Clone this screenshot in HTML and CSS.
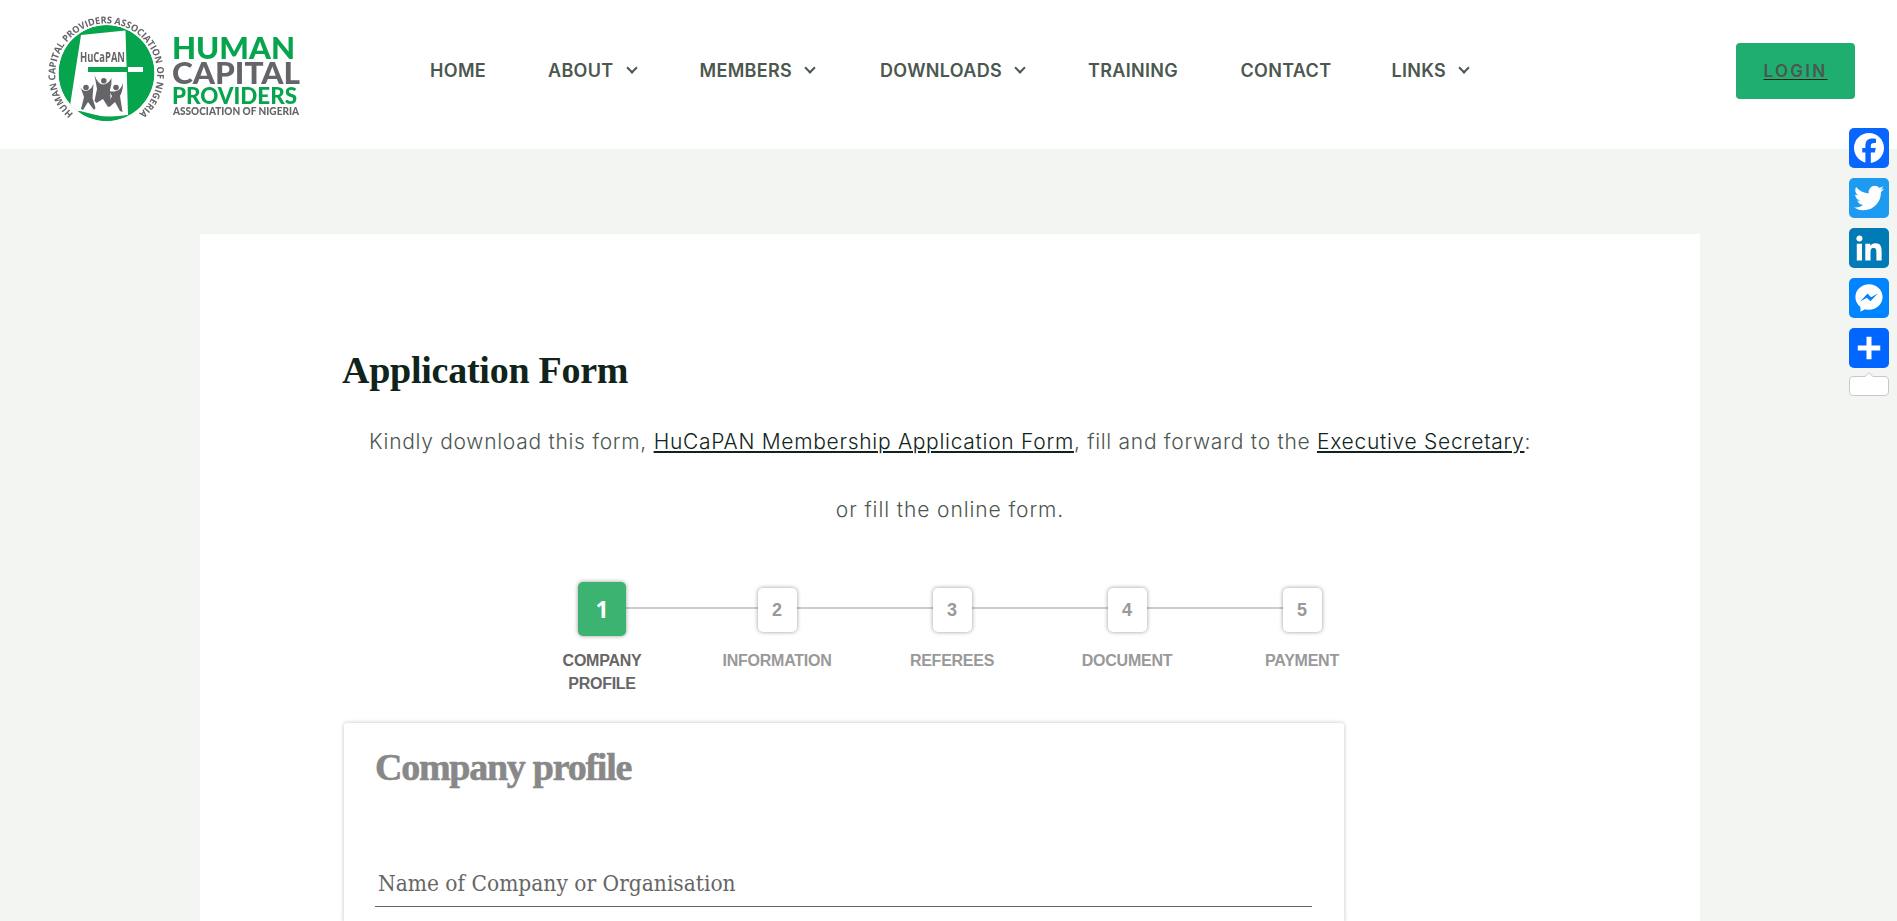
FILE: index.html
```html
<!DOCTYPE html>
<html lang="en">
<head>
<meta charset="utf-8">
<title>Application Form - HuCaPAN</title>
<link rel="stylesheet" href="styles.css">
</head>
<body>
<header class="site-header">
  <a class="logo">
    <svg width="290" height="149" viewBox="0 0 290 149">
      <defs>
        <path id="ring-text" d="M43.500 113.500A51 51 0 1 1 109 113.500"/>
        <clipPath id="disc"><circle cx="76.500" cy="73" r="48"/></clipPath>
      </defs>
      <g clip-path="url(#disc)">
        <circle cx="76.500" cy="73" r="48" fill="#06a44c"/>
        <path d="M51 35L95.500 30.500L98 115L82 119L50 111L39 112Z" fill="#fff"/>
        <path d="M50 112Q73 119 98 115V122H60Z" fill="#06a44c"/>
      </g>
      <path d="M58 67h39v5H58z" fill="#06a44c"/>
      <path d="M98 67h15v5H98z" fill="#fff"/>
      <g fill="#656468">
        <circle cx="56" cy="87.500" r="2.800"/><circle cx="73.800" cy="80.800" r="2.800"/><circle cx="86" cy="87.500" r="2.800"/>
        <path d="M48 83Q51 91 56 91Q61 90 63.500 84L62.500 98L65.500 108L64 110L58 102L53 110L51 109L54 97Q52 90 48 83Z"/>
        <path d="M64.500 75Q68 85 74 84.500Q79 83 81.500 78Q82 84 80 90L81 105L78 107L73 99L66.500 103L64.500 101L67 89Z"/>
        <path d="M79 91Q83 92 86 91Q91 90 93 83Q93 91 90 96L92.500 112L90 111L85 102L79.500 107L78 105L82 96Z"/>
      </g>
      <text class="logo-ring"><textPath href="#ring-text" textLength="249" lengthAdjust="spacingAndGlyphs">HUMAN CAPITAL PROVIDERS ASSOCIATION OF NIGERIA</textPath></text>
      <text class="logo-mark" x="50" y="61.500" textLength="45" lengthAdjust="spacingAndGlyphs">HuCaPAN</text>
      <text class="logo-word logo-green logo-xl" x="142" y="59" textLength="123" lengthAdjust="spacingAndGlyphs">HUMAN</text>
      <text class="logo-word logo-xl" x="142" y="84" textLength="128" lengthAdjust="spacingAndGlyphs">CAPITAL</text>
      <text class="logo-word logo-green logo-lg" x="142" y="104" textLength="125" lengthAdjust="spacingAndGlyphs">PROVIDERS</text>
      <text class="logo-word logo-sm" x="143" y="115" textLength="126" lengthAdjust="spacingAndGlyphs">ASSOCIATION OF NIGERIA</text>
    </svg>
  </a>
  <nav class="menu">
    <a>HOME</a>
    <a>ABOUT<i class="chevron"></i></a>
    <a>MEMBERS<i class="chevron"></i></a>
    <a>DOWNLOADS<i class="chevron"></i></a>
    <a>TRAINING</a>
    <a>CONTACT</a>
    <a>LINKS<i class="chevron"></i></a>
  </nav>
  <a class="login"><span>LOGIN</span></a>
</header>

<main class="page">
  <h1 class="title">Application Form</h1>
  <p class="intro">Kindly download this form, <a>HuCaPAN Membership Application Form</a>, fill and forward to the <a>Executive Secretary</a>:</p>
  <p class="intro intro-second">or fill the online form.</p>
  <ol class="steps">
    <li class="step step-active"><span class="step-number">1</span><span class="step-label">COMPANY PROFILE</span></li>
    <li class="step"><span class="step-number">2</span><span class="step-label">INFORMATION</span></li>
    <li class="step"><span class="step-number">3</span><span class="step-label">REFEREES</span></li>
    <li class="step"><span class="step-number">4</span><span class="step-label">DOCUMENT</span></li>
    <li class="step"><span class="step-number">5</span><span class="step-label">PAYMENT</span></li>
  </ol>
  <section class="card">
    <h2 class="card-title">Company profile</h2>
    <div class="field"><span>Name of Company or Organisation</span></div>
  </section>
</main>

<aside class="share">
  <svg class="share-icon facebook" viewBox="0 0 32 32"><path d="M28 16c0-6.627-5.373-12-12-12S4 9.373 4 16c0 5.628 3.875 10.350 9.101 11.647v-7.980h-2.474V16H13.100v-1.580c0-4.085 1.849-5.978 5.859-5.978.76 0 2.072.15 2.608.298v3.325c-.283-.03-.775-.045-1.386-.045-1.967 0-2.728.745-2.728 2.683V16h3.920l-.673 3.667h-3.247v8.245C23.395 27.195 28 22.135 28 16"/></svg>
  <svg class="share-icon twitter" viewBox="0 0 32 32"><path d="M28 8.557a10 10 0 0 1-2.828.775 4.930 4.930 0 0 0 2.166-2.725 9.700 9.700 0 0 1-3.130 1.194 4.920 4.920 0 0 0-3.593-1.550 4.924 4.924 0 0 0-4.794 6.049c-4.090-.21-7.720-2.170-10.150-5.150a4.940 4.940 0 0 0-.665 2.477c0 1.710.87 3.214 2.190 4.100a5 5 0 0 1-2.230-.616v.06c0 2.390 1.700 4.380 3.952 4.830-.414.115-.85.174-1.297.174q-.476-.001-.928-.086a4.935 4.935 0 0 0 4.600 3.420 9.900 9.900 0 0 1-6.114 2.107q-.597 0-1.175-.068a13.950 13.950 0 0 0 7.550 2.213c9.056 0 14.010-7.507 14.010-14.013q0-.32-.015-.637c.96-.695 1.795-1.560 2.455-2.550z"/></svg>
  <svg class="share-icon linkedin" viewBox="0 0 32 32"><path d="M6.227 12.610h4.190v13.480h-4.190zm2.095-6.700a2.430 2.430 0 0 1 0 4.860c-1.344 0-2.428-1.090-2.428-2.430s1.084-2.430 2.428-2.430m4.720 6.700h4.020v1.840h.058c.56-1.058 1.927-2.176 3.965-2.176 4.238 0 5.020 2.792 5.020 6.420v7.395h-4.183v-6.560c0-1.564-.03-3.574-2.178-3.574-2.180 0-2.514 1.700-2.514 3.460v6.668h-4.187z"/></svg>
  <svg class="share-icon messenger" viewBox="0 0 32 32"><path d="M16 5C9.986 5 5.110 9.560 5.110 15.182c0 3.200 1.580 6.054 4.046 7.920V27l3.716-2.060c.99.276 2.040.425 3.128.425 6.014 0 10.890-4.560 10.890-10.183S22.013 5 16 5m1.147 13.655L14.330 15.730l-5.423 3 5.946-6.310 2.816 2.925 5.420-3-5.946 6.310z"/></svg>
  <svg class="share-icon more" viewBox="0 0 32 32"><path d="M14 7h4v18h-4zM7 14h18v4H7z"/></svg>
  <svg class="share-count" width="40" height="25" viewBox="0 0 40 25"><path d="M4 4.500H16L20 .7L24 4.500H36Q39.500 4.500 39.500 8V20Q39.500 23.500 36 23.500H4Q.5 23.500 .5 20V8Q.5 4.500 4 4.500Z"/></svg>
</aside>
</body>
</html>
```
FILE: styles.css
```css
* { box-sizing: border-box; }

body {
  margin: 0;
  background: #f3f5f2;
  font-family: Inter, "Liberation Sans", sans-serif;
  color: #4b574f;
}

.site-header {
  display: flex;
  height: 149px;
  padding: 0 42px 0 30px;
  background: #fff;
}

.logo { width: 290px; flex: none; }
.logo svg { display: block; filter: blur(0.35px); }
.logo text { font-family: "Open Sans", sans-serif; font-weight: 700; fill: #656468; }
.logo .logo-ring { font-size: 9.5px; }
.logo .logo-mark { font-size: 15px; }
.logo .logo-word { font-family: Lato, sans-serif; font-weight: 900; }
.logo .logo-green { fill: #06a44c; }
.logo .logo-xl { font-size: 30px; }
.logo .logo-lg { font-size: 22px; }
.logo .logo-sm { font-size: 10.5px; }

.menu {
  display: grid;
  grid-template-columns: 118px 151.500px 180.500px 208px 152.500px 151px 100px;
  margin-left: 110px;
  height: 140px;
  align-items: center;
  font-size: 18px;
  font-weight: 600;
  letter-spacing: 0.320px;
}
.menu a { display: flex; align-items: center; }
.chevron {
  width: 8px;
  height: 8px;
  margin: -4px 0 0 14px;
  border: solid #4b574f;
  border-width: 0 2px 2px 0;
  transform: rotate(45deg);
}

.login {
  display: flex;
  align-items: center;
  justify-content: center;
  width: 119px;
  height: 56px;
  margin: 43px 0 0 auto;
  border-radius: 4px;
  background: #1fae70;
  font-size: 17px;
  font-weight: 600;
  letter-spacing: 2.300px;
  text-decoration: underline;
  text-decoration-color: #14231b;
  text-decoration-thickness: 1px;
  text-underline-offset: 2px;
}

.page {
  width: 1500px;
  height: 687px;
  margin: 85px 0 0 200px;
  padding: 111px 142px 0;
  background: #fff;
  overflow: hidden;
}

.title, .card-title {
  margin: 0;
  font-family: "Liberation Serif", serif;
  font-size: 38px;
  font-weight: 700;
  line-height: 50px;
}
.title { color: #10241b; letter-spacing: -0.250px; }

.intro {
  margin: 21px -10px 0;
  font-size: 21px;
  font-weight: 300;
  line-height: 52px;
  text-align: center;
  white-space: nowrap;
  letter-spacing: 0.710px;
}
.intro a {
  color: #10241b;
  text-decoration: underline;
  text-decoration-thickness: 2px;
  text-underline-offset: 2px;
}
.intro-second { margin-top: 16px; letter-spacing: 0.900px; }

.steps {
  display: grid;
  grid-template-columns: repeat(5, 175px);
  margin: 46px 0 0 172.500px;
  padding: 0;
  height: 141px;
  list-style: none;
  font-family: "Liberation Sans", sans-serif;
  font-weight: 700;
  color: #999;
}
.step {
  position: relative;
  display: flex;
  flex-direction: column;
  align-items: center;
}
.step:not(:last-child)::after {
  content: "";
  position: absolute;
  top: 25px;
  left: 50%;
  width: 100%;
  height: 2px;
  background: #ccc;
}
.step-number {
  position: relative;
  z-index: 1;
  display: flex;
  align-items: center;
  justify-content: center;
  width: 39px;
  height: 44px;
  margin: 6px 0 17px;
  border-radius: 5px;
  background: #fff;
  box-shadow: 0 0 4px rgba(0, 0, 0, 0.4);
  font-size: 18px;
}
.step-label {
  width: 120px;
  font-size: 16px;
  line-height: 23px;
  letter-spacing: -0.250px;
  text-align: center;
}
.step-active { color: #666; }
.step-active .step-label { width: 90px; }
.step-active .step-number {
  width: 48px;
  height: 54px;
  margin: 0 0 13px;
  padding-bottom: 1px;
  background: #3cb371;
  color: #fff;
  font-family: "Open Sans", sans-serif;
  font-size: 23px;
}

.card {
  width: 1000px;
  height: 199px;
  margin-left: 2px;
  padding: 19px 32px 0 31px;
  border-radius: 3px 3px 0 0;
  box-shadow: 0 0 4px rgba(0, 0, 0, 0.25);
}
.card-title {
  color: #888;
  letter-spacing: -1.250px;
  -webkit-text-stroke: 0.6px #888;
}
.field {
  height: 115px;
  padding: 73px 3px 0;
  border-bottom: 1px solid #666;
  color: #666;
  font-family: "DejaVu Serif Condensed", "DejaVu Serif", serif;
  font-size: 22.500px;
  line-height: 36px;
}

.share {
  position: fixed;
  top: 128px;
  right: 8px;
  display: flex;
  flex-direction: column;
  gap: 10px;
}
.share-icon { width: 40px; height: 40px; border-radius: 5px; fill: #fff; }
.facebook { background: #0866ff; }
.twitter { background: #1d9bf0; }
.linkedin { background: #007bb5; }
.messenger { background: #0084ff; }
.more { background: #0166ff; }
.share-count { margin-top: -6px; fill: #fff; stroke: #c8c8c8; }
```
